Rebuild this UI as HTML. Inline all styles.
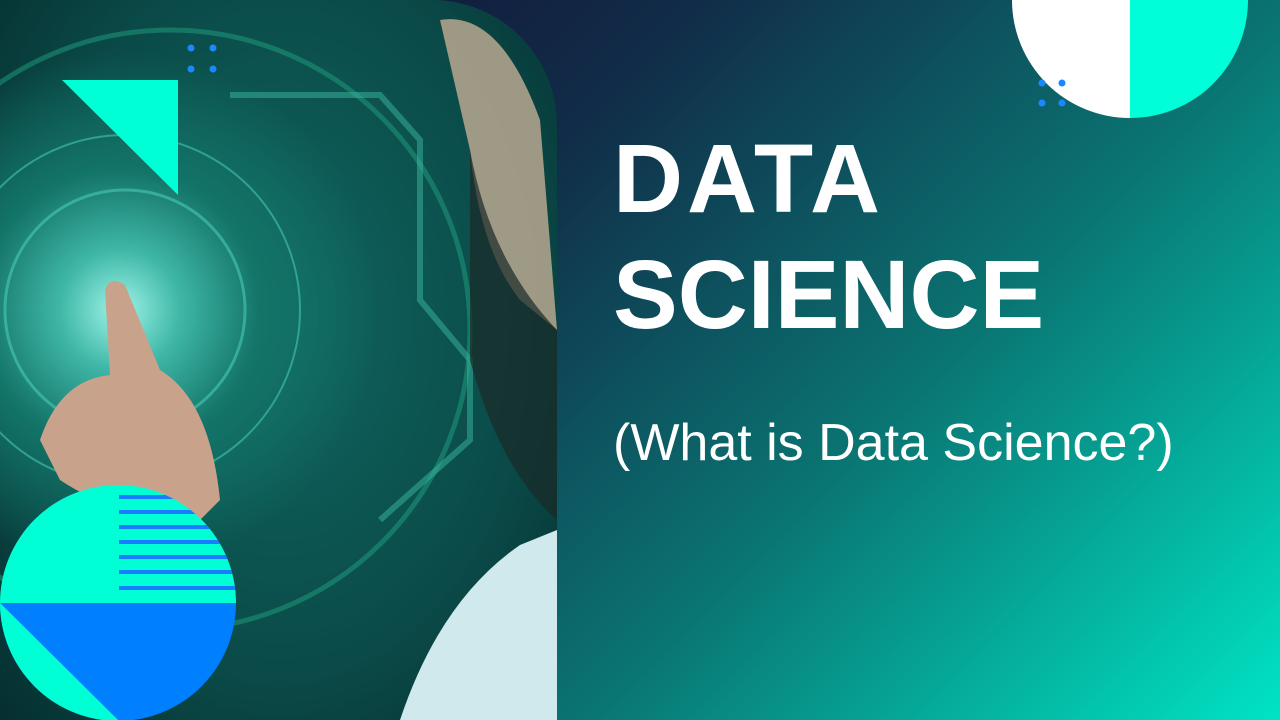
<!DOCTYPE html>
<html><head><style>
body{margin:0;width:1280px;height:720px;overflow:hidden;position:relative;font-family:"Liberation Sans",sans-serif;
background:linear-gradient(135deg,#140830 0%,#112c48 35%,#0a7472 65%,#00e4c4 100%);}
.img{position:absolute;left:0;top:0;width:557px;height:720px;border-top-right-radius:125px;overflow:hidden;
background:radial-gradient(circle at 120px 310px,#9ff5e8 0,#3fb7a8 60px,#137468 140px,rgba(10,70,66,0) 260px),
radial-gradient(ellipse at 280px 320px,#106660 0,#0a4a48 250px,#052a2b 420px);}
.t{position:absolute;color:#fff;font-weight:bold;font-size:97px;left:613px;line-height:1}
</style></head><body>
<div class="img">
<svg width="557" height="720" style="position:absolute;left:0;top:0">
<g fill="none" stroke="#4fd8c0" stroke-opacity=".5">
<circle cx="125" cy="310" r="120" stroke-width="3"/>
<circle cx="125" cy="310" r="175" stroke-width="2"/>
<circle cx="170" cy="330" r="300" stroke-width="5" stroke="#1fa07e"/>
<path d="M230 95 H380 L420 140 V300 L470 360 V440 L380 520" stroke-width="6" stroke="#3ab89e"/>
</g>
<path d="M440 20 Q500 10 540 120 L557 330 L520 300 Q480 250 470 150 Z" fill="#b8a890" opacity=".85"/>
<path d="M470 150 Q490 260 557 330 V520 Q500 470 470 360 Z" fill="#1a2a28" opacity=".7"/>
<path d="M40 440 Q60 380 110 375 L105 290 Q110 275 125 285 L160 370 Q210 400 220 500 L200 520 Q120 520 60 480 Z" fill="#c8a28a"/>
<path d="M400 720 Q440 600 520 545 L557 530 V720 Z" fill="#cfe9ec"/>
<polygon points="62,80 178,80 178,195" fill="#00ffd5"/>
<g fill="#1a88ff"><circle cx="191" cy="48" r="3.5"/><circle cx="213" cy="48" r="3.5"/><circle cx="191" cy="69" r="3.5"/><circle cx="213" cy="69" r="3.5"/></g>
</svg>
</div>
<svg width="1280" height="720" style="position:absolute;left:0;top:0">
<defs><clipPath id="c"><circle cx="118" cy="603" r="118"/></clipPath></defs>
<g clip-path="url(#c)">
<rect x="0" y="480" width="240" height="123" fill="#00ffd5"/>
<rect x="0" y="603" width="240" height="120" fill="#0080ff"/>
<polygon points="0,603 118,720 0,720" fill="#00ffd5"/>
<g fill="#1a7dff"><rect x="119" y="495" width="120" height="4"/><rect x="119" y="510" width="120" height="4"/><rect x="119" y="525" width="120" height="4"/><rect x="119" y="540" width="120" height="4"/><rect x="119" y="555" width="120" height="4"/><rect x="119" y="570" width="120" height="4"/><rect x="119" y="586" width="120" height="4"/></g>
</g>
<path d="M1012 0 A118 118 0 0 0 1130 118 V0 Z" fill="#fff"/>
<path d="M1130 0 V118 A118 118 0 0 0 1248 0 Z" fill="#00ffd8"/>
<g fill="#1a88ff"><circle cx="1042" cy="83" r="3.5"/><circle cx="1062" cy="83" r="3.5"/><circle cx="1042" cy="103" r="3.5"/><circle cx="1062" cy="103" r="3.5"/></g>
</svg>
<div class="t" style="top:130px;letter-spacing:4px">DATA</div>
<div class="t" style="top:246px">SCIENCE</div>
<div style="position:absolute;left:613px;top:417px;color:#fff;font-size:52px;line-height:1">(What is Data Science?)</div>
</body></html>
